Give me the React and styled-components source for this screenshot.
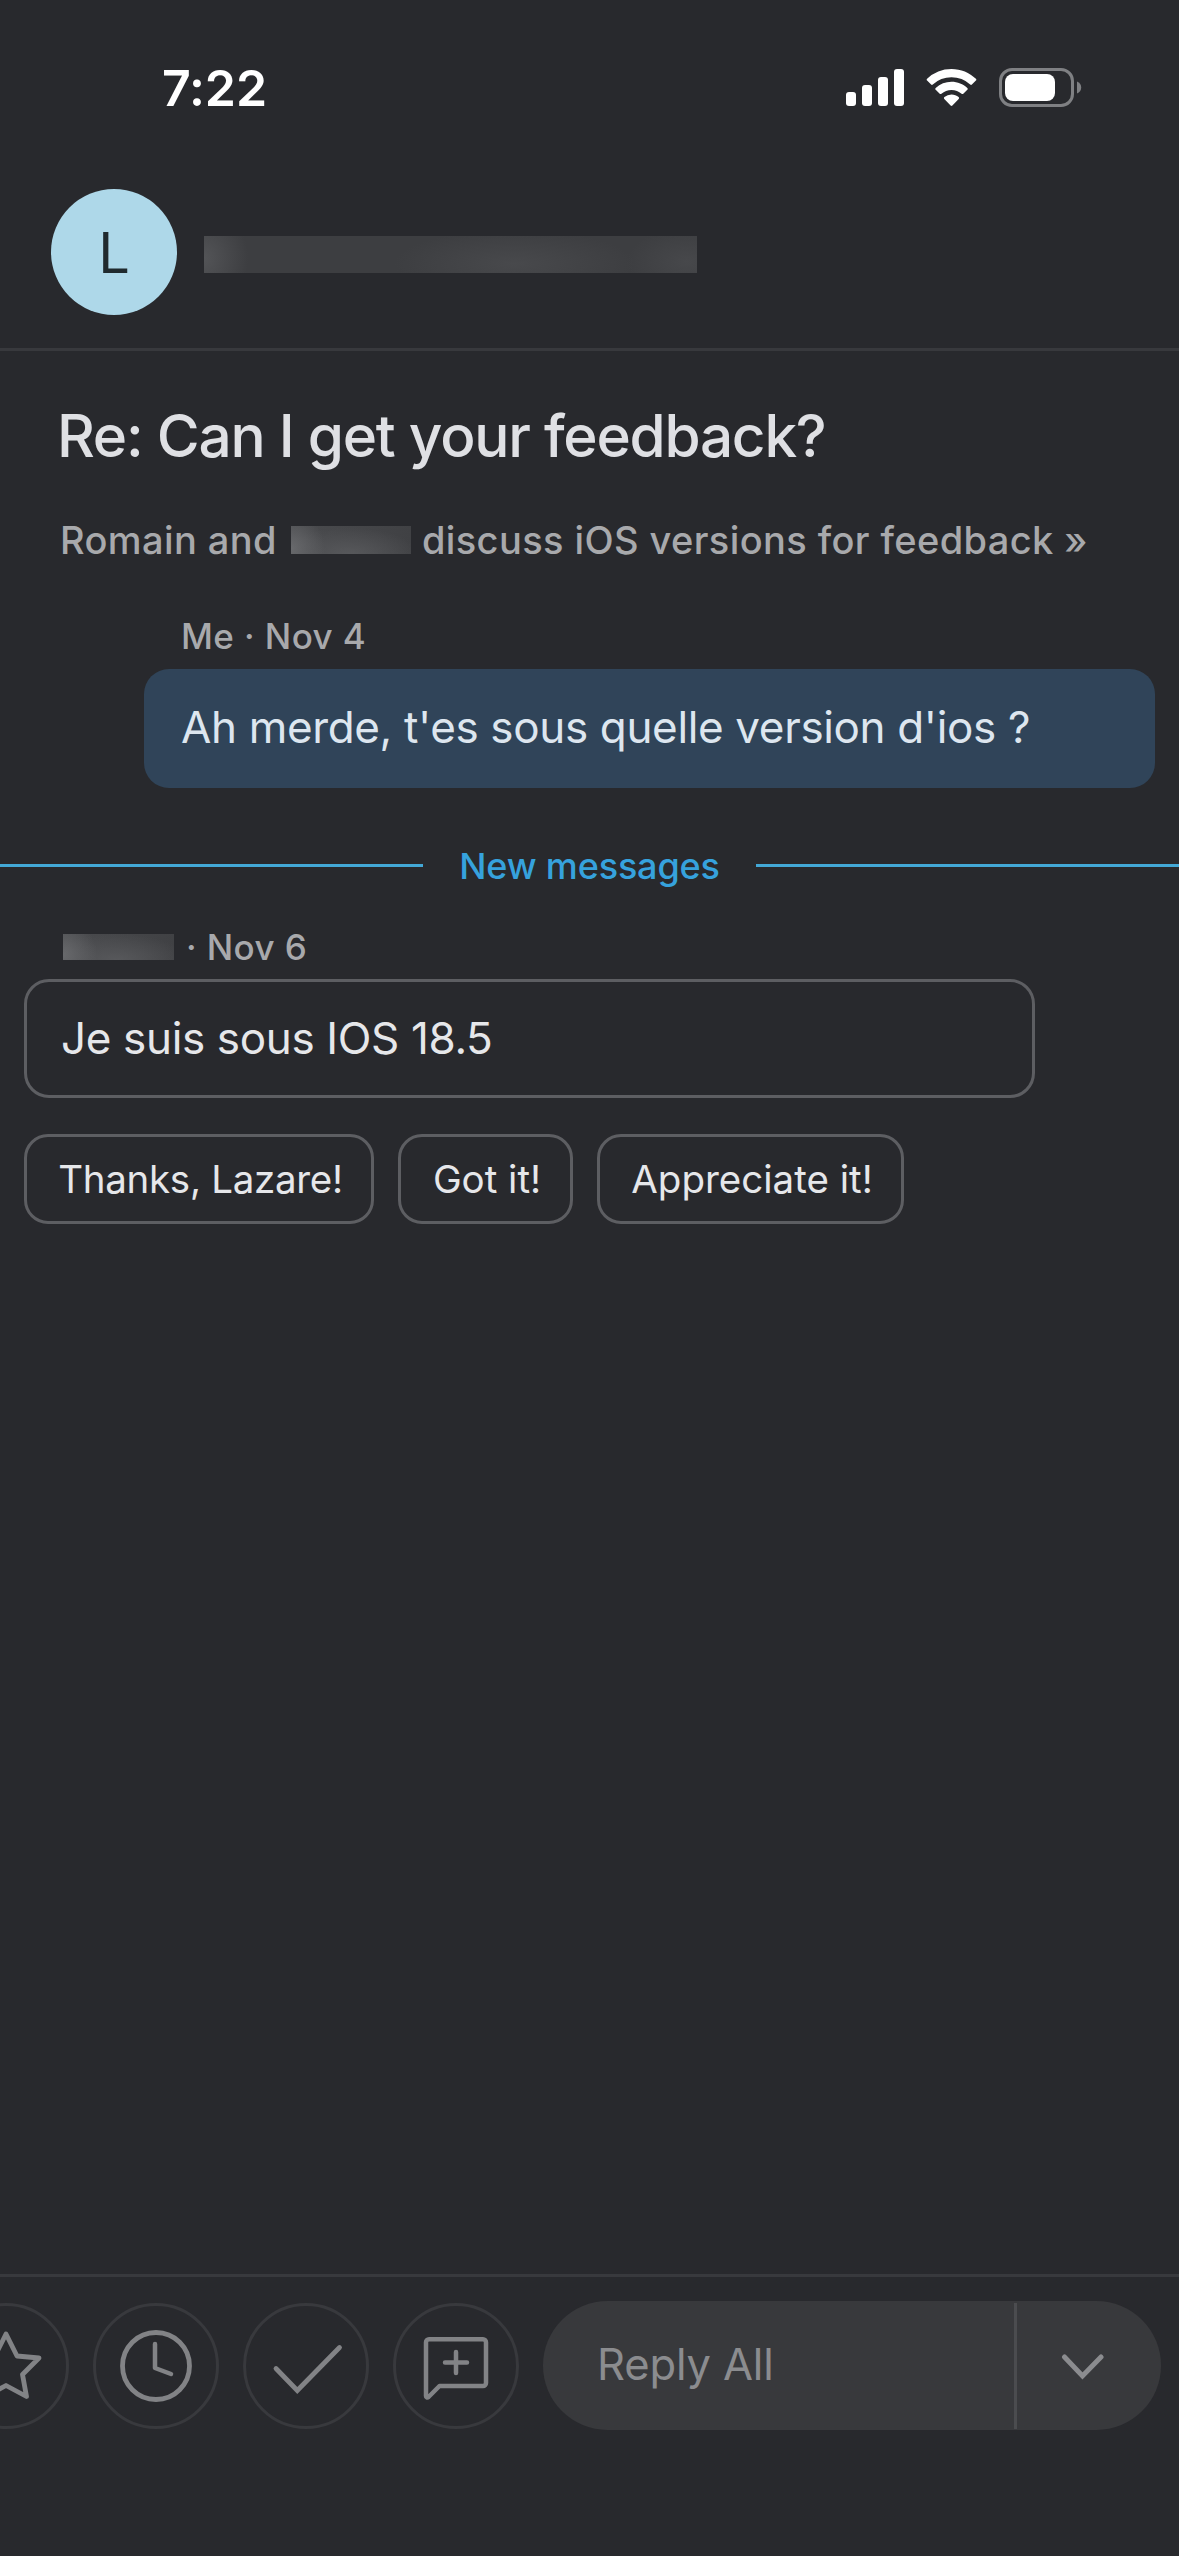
import React from 'react';
import styled, { createGlobalStyle } from 'styled-components';

const GlobalStyle = createGlobalStyle`
  * {
    box-sizing: border-box;
  }

  body {
    margin: 0;
    background: #28292d;
  }
`;

const Screen = styled.div`
  display: flex;
  flex-direction: column;
  width: 1179px;
  height: 2556px;
  overflow: hidden;
  background: #28292d;
  color: #dfe0e4;
  font-family: Inter, 'Liberation Sans', sans-serif;
`;

const StatusBar = styled.div`
  display: flex;
  align-items: center;
  justify-content: space-between;
  height: 176px;
  padding: 0 97px 0 162px;
`;

const Time = styled.div`
  color: #fff;
  font-size: 50px;
  font-weight: 600;
  letter-spacing: -0.1px;
`;

const StatusIcons = styled.div`
  display: flex;
  align-items: center;
  gap: 22px;

  svg {
    display: block;
  }
`;

const Header = styled.header`
  display: flex;
  align-items: center;
  gap: 27px;
  height: 175px;
  padding: 0 0 20px 51px;
  border-bottom: 3px solid #38393d;
`;

const Avatar = styled.div`
  display: flex;
  align-items: center;
  justify-content: center;
  width: 126px;
  height: 126px;
  padding-top: 2px;
  border-radius: 50%;
  background: #aed8e9;
  color: #202a2e;
  font-size: 56px;
`;

const HiddenAddress = styled.div`
  width: 493px;
  height: 37px;
  margin-top: 5px;
  background:
    radial-gradient(ellipse 44px 50px at 0% 60%, #535457, transparent),
    radial-gradient(ellipse 120px 34px at 63% 75%, #48494c, transparent),
    radial-gradient(ellipse 60px 34px at 98% 70%, #47484b, transparent),
    #3d3e41;
`;

const HiddenName = styled.span`
  display: inline-block;
  width: ${({ $width }) => $width}px;
  height: ${({ $height }) => $height}px;
  background:
    radial-gradient(ellipse 34px 36px at 0% 80%, #68696c, transparent),
    radial-gradient(ellipse 70px 26px at 48% 100%, #57585b, transparent),
    linear-gradient(90deg, #4a4b4e, #404144);
`;

const Thread = styled.main`
  display: flex;
  flex-direction: column;
  padding-top: 49px;
`;

const Subject = styled.h1`
  margin: 0 0 44px 57px;
  font-size: 58.5px;
  font-weight: 500;
  line-height: 72px;
  letter-spacing: -1.25px;
  white-space: nowrap;
`;

const Summary = styled.div`
  display: flex;
  align-items: center;
  margin: 0 0 50px 60px;
  color: #a8a9ac;
  font-size: 38px;
  font-weight: 500;
  line-height: 48px;
  letter-spacing: 0.4px;
  white-space: nowrap;
`;

const SummaryName = styled(HiddenName)`
  margin: 0 11px 0 14px;
`;

const Sender = styled.div`
  display: flex;
  align-items: center;
  gap: 12px;
  margin: 0 0 ${({ $gap = 10 }) => $gap}px ${({ $left }) => $left}px;
  color: #a8a9ac;
  font-size: 35px;
  font-weight: 500;
  line-height: 44px;
  letter-spacing: 0.4px;
  white-space: nowrap;
`;

const Bubble = styled.div`
  display: flex;
  align-items: center;
  width: 1011px;
  height: 119px;
  margin-left: ${({ $mine }) => ($mine ? 144 : 24)}px;
  padding: 0 0 ${({ $mine }) => ($mine ? 3 : 1)}px ${({ $mine }) => ($mine ? 37 : 34)}px;
  border: ${({ $mine }) => ($mine ? 'none' : '3px solid #5d5e62')};
  border-radius: 25px;
  background: ${({ $mine }) => ($mine ? '#304459' : 'transparent')};
  color: ${({ $mine }) => ($mine ? '#dde6ef' : '#e6e7ea')};
  font-size: 44px;
  letter-spacing: -0.35px;
  white-space: nowrap;
`;

const NewMessages = styled.div`
  display: flex;
  align-items: center;
  gap: 36px;
  height: 49px;
  margin: 53px 0 35px;
  color: #36a2dd;
  font-size: 36px;
  font-weight: 500;
  letter-spacing: -0.15px;
  white-space: nowrap;

  &::before,
  &::after {
    content: '';
    flex: 1;
    height: 3px;
    background: #43a8d6;
  }
`;

const QuickReplies = styled.div`
  display: flex;
  gap: 24px;
  margin: 36px 0 0 24px;
`;

const QuickReply = styled.button`
  width: ${({ $width }) => $width}px;
  height: 90px;
  padding: 0 0 0 3px;
  border: 3px solid #5d5e62;
  border-radius: 24px;
  background: none;
  color: #e6e7ea;
  font-family: inherit;
  font-size: 38.5px;
  letter-spacing: ${({ $tracking = 0 }) => $tracking}px;
  white-space: nowrap;
`;

const Toolbar = styled.footer`
  display: flex;
  align-items: flex-start;
  gap: 24px;
  height: 282px;
  margin-top: auto;
  padding-top: 24px;
  border-top: 3px solid #38393d;
`;

const Action = styled.button`
  flex: none;
  width: 126px;
  height: 126px;
  margin-top: 2px;
  padding: 0;
  border: 3px solid #38393d;
  border-radius: 50%;
  background: none;
  color: #828386;

  &:first-child {
    margin-left: -57px;
  }

  svg {
    display: block;
    margin: -3px;
    fill: none;
    stroke: currentColor;
    stroke-width: 4.8;
    stroke-linecap: round;
    stroke-linejoin: round;
  }
`;

const ReplyGroup = styled.div`
  display: flex;
  align-items: center;
  width: 618px;
  height: 129px;
  border-radius: 65px;
  background: #38393c;
  color: #8b8c8f;
`;

const ReplyAll = styled.div`
  flex: 1;
  padding: 0 0 3px 54px;
  font-size: 43.5px;
  letter-spacing: -0.15px;
`;

const ReplyMenu = styled.div`
  display: flex;
  align-items: center;
  width: 147px;
  height: 126px;
  padding-left: 44px;
  border-left: 3px solid #4b4c4f;
`;

const Signal = () => (
  <svg width="58" height="40" viewBox="846 68 58 40" fill="#fff">
    <rect x="846" y="92" width="10" height="14" rx="3" />
    <rect x="862" y="85" width="10" height="21" rx="3" />
    <rect x="878" y="77" width="10" height="29" rx="3" />
    <rect x="894" y="69" width="10" height="37" rx="3" />
  </svg>
);

const Wifi = () => (
  <svg width="51" height="40" viewBox="0 0 51 40" fill="#fff">
    <path d="M25.5 1c9.4 0 18 3.7 24.4 9.8.6.5.6 1.3 0 1.8l-4 4c-.5.5-1.2.5-1.7 0a27.3 27.3 0 0 0-37.400 0c-.5.5-1.2.5-1.7 0l-4-4c-.6-.5-.6-1.3 0-1.8A35.3 35.3 0 0 1 25.5 1z" />
    <path d="M25.5 13.800c6.1 0 11.6 2.3 15.8 6.1.6.5.6 1.3 0 1.8l-4 4c-.5.5-1.2.5-1.7.1a15 15 0 0 0-20.2 0c-.5.4-1.2.4-1.7-.1l-4-4c-.6-.5-.6-1.3 0-1.8a23.5 23.5 0 0 1 15.8-6.1z" />
    <path d="M25.5 26.5c2.7 0 5.2 1 7.1 2.6.6.5.6 1.3.1 1.9l-6.3 6.5c-.5.5-1.3.5-1.8 0L18.3 31c-.5-.6-.5-1.4.1-1.9a11 11 0 0 1 7.1-2.6z" />
  </svg>
);

const Battery = () => (
  <svg width="83" height="40" viewBox="0 0 83 40">
    <rect x="1.5" y="1.5" width="72" height="36" rx="11.5" fill="none" stroke="#7f8083" strokeWidth="3" />
    <rect x="6" y="6" width="50" height="27" rx="8" fill="#fff" />
    <path d="M78 13.500v12c2.600-1 4.200-3.300 4.200-6s-1.600-5-4.200-6z" fill="#7f8083" />
  </svg>
);

const icons = {
  star: <path d="M63 31 74 53 96 55 79.500 71.500 83.500 93.500 63 82.500 42.500 93.500 46.500 71.500 30 55 52 53z" />,
  snooze: (
    <>
      <circle cx="63" cy="63" r="33.5" />
      <path d="M62 41v24l16 6" strokeWidth="4.5" />
    </>
  ),
  done: <path d="M33 65.500 54.300 87.500 96.500 44.500" strokeLinejoin="miter" />,
  comment: (
    <>
      <path d="M36 36.300h54a3 3 0 0 1 3 3v40.700a3 3 0 0 1-3 3H46.500l-11 11c-1.200 1-2.500.5-2.500-1V39.300a3 3 0 0 1 3-3z" strokeWidth="4.5" />
      <path d="M52 59.500h22M63 49v21" strokeWidth="4.5" />
    </>
  ),
};

const App = () => {
  return (
    <>
      <GlobalStyle />
      <Screen>
        <StatusBar>
          <Time>7:22</Time>
          <StatusIcons>
            <Signal />
            <Wifi />
            <Battery />
          </StatusIcons>
        </StatusBar>
        <Header>
          <Avatar>L</Avatar>
          <HiddenAddress />
        </Header>
        <Thread>
          <Subject>Re: Can I get your feedback?</Subject>
          <Summary>
            <span>Romain and</span>
            <SummaryName $width={120} $height={28} />
            <span>discuss iOS versions for feedback »</span>
          </Summary>
          <Sender $left={181} $gap={11}>Me · Nov 4</Sender>
          <Bubble $mine>Ah merde, t'es sous quelle version d'ios ?</Bubble>
          <NewMessages>New messages</NewMessages>
          <Sender $left={63}>
            <HiddenName $width={111} $height={26} />
            <span>· Nov 6</span>
          </Sender>
          <Bubble>Je suis sous IOS 18.5</Bubble>
          <QuickReplies>
            <QuickReply $width={350} $tracking={-0.3}>Thanks, Lazare!</QuickReply>
            <QuickReply $width={175}>Got it!</QuickReply>
            <QuickReply $width={307}>Appreciate it!</QuickReply>
          </QuickReplies>
        </Thread>
        <Toolbar>
          {Object.keys(icons).map((name) => (
            <Action key={name} aria-label={name}>
              <svg width="126" height="126" viewBox="0 0 126 126">
                {icons[name]}
              </svg>
            </Action>
          ))}
          <ReplyGroup>
            <ReplyAll>Reply All</ReplyAll>
            <ReplyMenu>
              <svg width="44" height="30" viewBox="0 0 44 30" fill="none" stroke="currentColor" strokeWidth="5" strokeLinecap="round">
                <path d="M3.500 6 21.500 25 40 6" />
              </svg>
            </ReplyMenu>
          </ReplyGroup>
        </Toolbar>
      </Screen>
    </>
  );
};

export default App;
